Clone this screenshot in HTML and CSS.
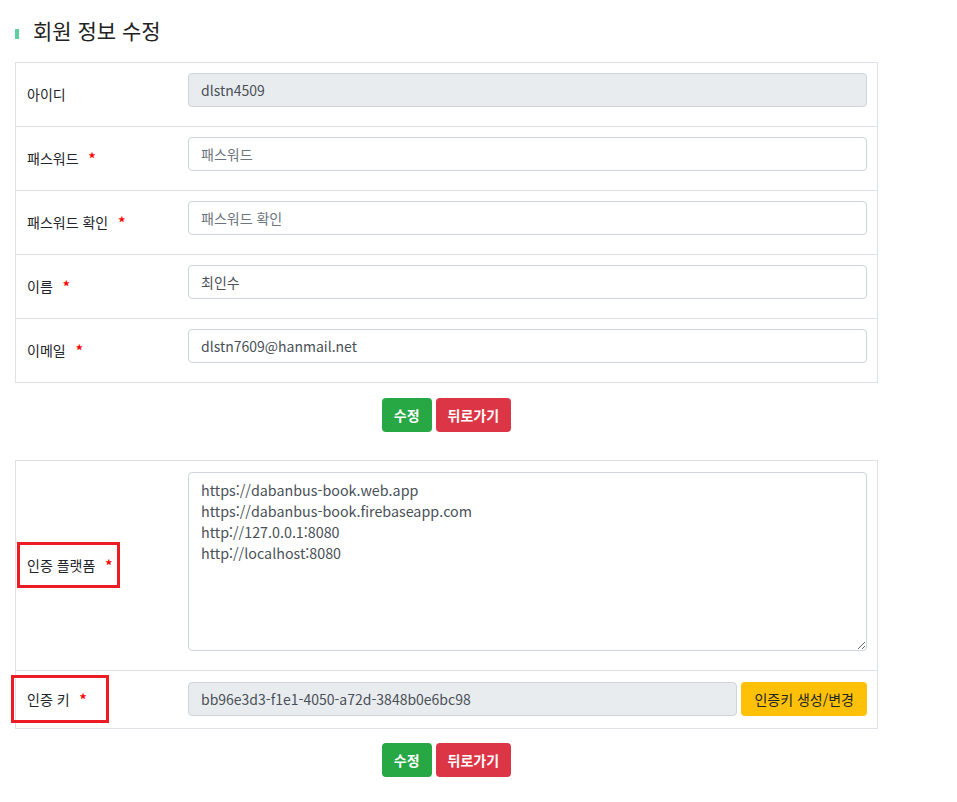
FILE: index.html
```html
<!DOCTYPE html>
<html lang="ko">
<head>
<meta charset="utf-8">
<title>회원 정보 수정</title>
<link rel="stylesheet" href="styles.css">
</head>
<body>
<div class="page">
  <h2 class="title"><span class="title-bar"></span><span>회원 정보 수정</span></h2>

  <div class="form-box">
    <div class="form-row">
      <div class="label"><span class="label-text">아이디</span></div>
      <div class="field"><input class="input" type="text" value="dlstn4509" disabled></div>
    </div>
    <div class="form-row">
      <div class="label"><span class="label-text">패스워드<span class="req">*</span></span></div>
      <div class="field"><input class="input" type="password" placeholder="패스워드"></div>
    </div>
    <div class="form-row">
      <div class="label"><span class="label-text">패스워드 확인<span class="req">*</span></span></div>
      <div class="field"><input class="input" type="password" placeholder="패스워드 확인"></div>
    </div>
    <div class="form-row">
      <div class="label"><span class="label-text">이름<span class="req">*</span></span></div>
      <div class="field"><input class="input" type="text" value="최인수"></div>
    </div>
    <div class="form-row">
      <div class="label"><span class="label-text">이메일<span class="req">*</span></span></div>
      <div class="field"><input class="input" type="text" value="dlstn7609@hanmail.net"></div>
    </div>
  </div>

  <div class="actions actions-1">
    <button class="btn btn-success">수정</button>
    <button class="btn btn-danger">뒤로가기</button>
  </div>

  <div class="form-box">
    <div class="form-row row-area">
      <div class="label"><span class="label-text annot annot-1">인증 플랫폼<span class="req">*</span></span></div>
      <div class="field field-area"><textarea class="textarea">https://dabanbus-book.web.app
https://dabanbus-book.firebaseapp.com
http://127.0.0.1:8080
http://localhost:8080</textarea></div>
    </div>
    <div class="form-row row-key">
      <div class="label"><span class="label-text annot annot-2">인증 키<span class="req">*</span></span></div>
      <div class="field field-key">
        <input class="input" type="text" value="bb96e3d3-f1e1-4050-a72d-3848b0e6bc98" disabled>
        <button class="btn btn-warning">인증키 생성/변경</button>
      </div>
    </div>
  </div>

  <div class="actions actions-2">
    <button class="btn btn-success">수정</button>
    <button class="btn btn-danger">뒤로가기</button>
  </div>
</div>
</body>
</html>
```
FILE: styles.css
```css
* { box-sizing: border-box; }

html, body {
  margin: 0;
  padding: 0;
  background: #fff;
}

body {
  font-family: "Noto Sans CJK KR", "Noto Sans", sans-serif;
  font-size: 14px;
  color: #212529;
}

.page {
  width: 863px;
  margin-left: 15px;
}

.title {
  display: flex;
  align-items: center;
  margin: 16px 0 18px;
  height: 28px;
  font-size: 21px;
  line-height: 28px;
  font-weight: 400;
  color: #222;
}

.title-bar {
  width: 4px;
  height: 10px;
  background: #5fcf9f;
  margin: 8px 14px 0 0;
}

.form-box {
  border: 1px solid #dee2e6;
}

.form-row {
  display: grid;
  grid-template-columns: 161px 1fr;
}

.form-row + .form-row {
  border-top: 1px solid #dee2e6;
}

.label {
  display: flex;
  align-items: center;
  padding-left: 11px;
  padding-bottom: 2px;
  font-size: 14px;
  line-height: 20px;
  color: #212529;
}

.label-text {
  display: inline-flex;
}

.req {
  color: #ff0000;
  margin-left: 10px;
  font-weight: bold;
  align-self: flex-start;
}

.field {
  padding: 10px 10px 19px 11px;
}

.input {
  display: block;
  width: 100%;
  height: 34px;
  padding: 0 12px;
  border: 1px solid #ced4da;
  border-radius: 4px;
  font-family: "Noto Sans CJK KR", "Noto Sans", sans-serif;
  font-size: 14px;
  color: #495057;
  background: #fff;
}

.input::placeholder {
  color: #6c757d;
}

.input:disabled {
  background: #e9ecef;
  color: #495057;
}

.field-area {
  padding: 11px 10px 19px 11px;
}

.textarea {
  display: block;
  width: 100%;
  height: 179px;
  padding: 6px 12px;
  border: 1px solid #ced4da;
  border-radius: 4px;
  font-family: "Noto Sans CJK KR", "Noto Sans", sans-serif;
  font-size: 14.3px;
  line-height: 21px;
  color: #495057;
  resize: vertical;
}

.field-key {
  display: flex;
  gap: 4px;
  padding: 11px 10px 12px 11px;
}

.field-key .input {
  flex: 1;
}

.annot {
  position: relative;
}

.annot::after {
  content: "";
  position: absolute;
  border: 3px solid #ed1c24;
}

.annot-1::after {
  left: -10px;
  right: -8px;
  top: -13px;
  bottom: -13px;
}

.annot-2::after {
  left: -16px;
  right: -22px;
  top: -14px;
  bottom: -14px;
}

.actions {
  display: flex;
  justify-content: center;
  gap: 4px;
}

.actions-1 {
  margin: 15px 0 28px;
}

.actions-2 {
  margin-top: 14px;
}

.btn {
  height: 34px;
  padding: 0 11px;
  border: 1px solid transparent;
  border-radius: 4px;
  font-family: "Noto Sans CJK KR", "Noto Sans", sans-serif;
  font-size: 14px;
  line-height: 20px;
  cursor: pointer;
}

.btn-success {
  background: #28a745;
  color: #fff;
  font-weight: bold;
}

.btn-danger {
  background: #dc3545;
  color: #fff;
  font-weight: bold;
}

.btn-warning {
  background: #ffc107;
  color: #212529;
  padding: 0 12px;
}
```
